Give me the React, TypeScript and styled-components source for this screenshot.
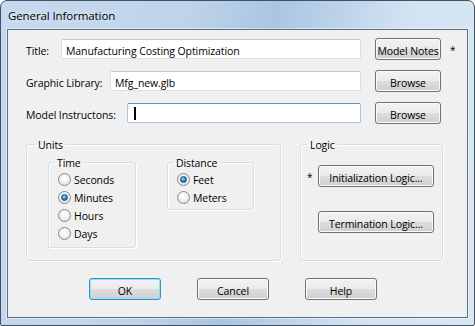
import React from 'react';
import styled, { createGlobalStyle } from 'styled-components';

const GlobalStyle = createGlobalStyle`
  html, body {
    margin: 0;
    padding: 0;
    background: #ffffff;
  }
  body {
    font-family: "Open Sans", "Noto Sans", sans-serif;
    font-size: 10.5px;
    letter-spacing: -0.1px;
    color: #000;
  }
`;

const Window = styled.div`
  box-sizing: border-box;
  width: 475px;
  height: 326px;
  display: flex;
  flex-direction: column;
  border: 1px solid #44505f;
  border-radius: 7px 7px 2px 2px;
  background: linear-gradient(
    100deg,
    #c6d9ee 0%,
    #bfd4eb 35%,
    #aac5e2 52%,
    #b9d0e9 62%,
    #d3e3f3 78%,
    #d9e7f5 100%
  );
  overflow: hidden;
`;

const TitleBar = styled.div`
  height: 28px;
  flex-shrink: 0;
  display: flex;
  align-items: center;
  padding: 1px 0 0 7px;
  box-sizing: border-box;
  font-size: 11.5px;
  color: #000;
  text-shadow: 0 0 6px rgba(255, 255, 255, 0.9);
`;

const Client = styled.div`
  flex: 1;
  margin: 0 6px 7px 6px;
  border: 1px solid #5f6f82;
  box-shadow: 0 0 0 1px rgba(255, 255, 255, 0.45);
  background: #f0f0f0;
  padding: 8px 0 0 18px;
  display: flex;
  flex-direction: column;
`;

const Rows = styled.div`
  display: flex;
  flex-direction: column;
  gap: 10px;
`;

const Row = styled.div`
  display: flex;
  align-items: center;
  height: 22px;
`;

const Label = styled.span<{ $width: number }>`
  width: ${(p) => p.$width}px;
  flex-shrink: 0;
  padding-top: 3px;
  white-space: nowrap;
`;

const TextBox = styled.div<{ $focused?: boolean }>`
  flex: 1;
  height: 20px;
  box-sizing: border-box;
  display: flex;
  align-items: center;
  padding: 3px 4px 0 4px;
  background: #fff;
  border: 1px solid ${(p) => (p.$focused ? '#a6c8e6' : '#dcdfe4')};
  border-top-color: ${(p) => (p.$focused ? '#5b93c8' : '#c4c8cf')};
  border-radius: 2px;
  white-space: nowrap;
`;

const Caret = styled.span`
  display: inline-block;
  width: 2px;
  height: 13px;
  margin: -3px 0 0 2px;
  background: #000;
`;

const Button = styled.button<{ $width: number; $default?: boolean }>`
  box-sizing: border-box;
  width: ${(p) => p.$width}px;
  height: 22px;
  flex-shrink: 0;
  margin: 0;
  padding: 3px 0 0 0;
  font: inherit;
  letter-spacing: inherit;
  white-space: nowrap;
  color: #000;
  border: 1px solid ${(p) => (p.$default ? '#3c8fc4' : '#707070')};
  border-radius: 3px;
  background: linear-gradient(#f2f2f2 0%, #ebebeb 48%, #dddddd 52%, #cfcfcf 100%);
  box-shadow: inset 0 0 0 1px ${(p) => (p.$default ? '#8fe0fb' : '#fbfbfb')};
`;

const SideButton = styled(Button)`
  margin-left: 14px;
`;

const Star = styled.span<{ $width: number; $pad: number }>`
  width: ${(p) => p.$width}px;
  padding-left: ${(p) => p.$pad}px;
  padding-top: 2px;
  box-sizing: border-box;
  flex-shrink: 0;
  font-size: 10px;
`;

const Groups = styled.div`
  display: flex;
  gap: 19px;
  margin-top: 12px;
`;

const GroupBox = styled.fieldset<{ $width: number; $height?: number; $legendLeft: number }>`
  box-sizing: border-box;
  width: ${(p) => p.$width}px;
  height: ${(p) => (p.$height ? `${p.$height}px` : 'auto')};
  margin: 0;
  min-width: 0;
  border: 1px solid #d5dfe5;
  border-radius: 3px;
  box-shadow: inset 1px 1px 0 #fff, 1px 1px 0 #fff;

  legend {
    line-height: 16px;
    padding: 1px 2px 0 2px;
    margin-left: ${(p) => p.$legendLeft}px;
  }
`;

const UnitsBox = styled(GroupBox)`
  padding: 1px 0 0 21px;
  display: flex;
  align-items: flex-start;
  gap: 31px;
`;

const RadioBox = styled(GroupBox)`
  padding: 0 0 0 9px;
`;

const RadioList = styled.div`
  margin-top: -1px;
`;

const LogicBox = styled(GroupBox)`
  padding: 12px 0 0 6px;
  display: flex;
  flex-direction: column;
  gap: 24px;
`;

const LogicRow = styled.div`
  display: flex;
  align-items: center;
`;

const RadioRow = styled.div`
  display: flex;
  align-items: center;
  height: 18px;
  gap: 3px;

  span:last-child {
    padding-top: 2px;
  }
`;

const RadioCircle = styled.span<{ $checked?: boolean }>`
  box-sizing: border-box;
  width: 13px;
  height: 13px;
  border-radius: 50%;
  border: 1px solid #8a8a8a;
  background: radial-gradient(circle at 50% 40%, #ffffff 0%, #f4f4f4 40%, #d6d6d6 100%);
  display: flex;
  align-items: center;
  justify-content: center;

  &::after {
    content: '';
    display: ${(p) => (p.$checked ? 'block' : 'none')};
    width: 7px;
    height: 7px;
    border-radius: 50%;
    background: radial-gradient(circle at 40% 35%, #9fe0ff 0%, #2e8fd0 45%, #0f4f86 100%);
    border: 0.5px solid #1c4d78;
    box-sizing: border-box;
  }
`;

const BottomBar = styled.div`
  display: flex;
  gap: 36px;
  margin-top: 17px;
  padding-left: 63px;
`;

type RadioProps = { label: string; checked?: boolean };

function Radio({ label, checked }: RadioProps) {
  return (
    <RadioRow>
      <RadioCircle $checked={checked} />
      <span>{label}</span>
    </RadioRow>
  );
}

export default function App() {
  return (
    <>
      <GlobalStyle />
      <Window>
        <TitleBar>General Information</TitleBar>
        <Client>
          <Rows>
            <Row>
              <Label $width={35}>Title:</Label>
              <TextBox>Manufacturing Costing Optimization</TextBox>
              <SideButton $width={66}>Model Notes</SideButton>
              <Star $width={26} $pad={9}>*</Star>
            </Row>
            <Row>
              <Label $width={84}>Graphic Library:</Label>
              <TextBox>Mfg_new.glb</TextBox>
              <SideButton $width={66}>Browse</SideButton>
              <Star $width={26} $pad={9} />
            </Row>
            <Row>
              <Label $width={101}>Model Instructons:</Label>
              <TextBox $focused>
                <Caret />
              </TextBox>
              <SideButton $width={66}>Browse</SideButton>
              <Star $width={26} $pad={9} />
            </Row>
          </Rows>

          <Groups>
            <UnitsBox $width={255} $height={125} $legendLeft={-12}>
              <legend>Units</legend>
              <RadioBox $width={88} $height={94} $legendLeft={-3}>
                <legend>Time</legend>
                <RadioList>
                  <Radio label="Seconds" />
                  <Radio label="Minutes" checked />
                  <Radio label="Hours" />
                  <Radio label="Days" />
                </RadioList>
              </RadioBox>
              <RadioBox $width={87} $height={56} $legendLeft={-3}>
                <legend>Distance</legend>
                <RadioList>
                  <Radio label="Feet" checked />
                  <Radio label="Meters" />
                </RadioList>
              </RadioBox>
            </UnitsBox>

            <LogicBox $width={143} $height={125} $legendLeft={1}>
              <legend>Logic</legend>
              <LogicRow>
                <Star $width={11} $pad={0}>*</Star>
                <Button $width={116}>Initialization Logic...</Button>
              </LogicRow>
              <LogicRow>
                <Star $width={11} $pad={0} />
                <Button $width={116}>Termination Logic...</Button>
              </LogicRow>
            </LogicBox>
          </Groups>

          <BottomBar>
            <Button $width={72} $default>OK</Button>
            <Button $width={72}>Cancel</Button>
            <Button $width={72}>Help</Button>
          </BottomBar>
        </Client>
      </Window>
    </>
  );
}
